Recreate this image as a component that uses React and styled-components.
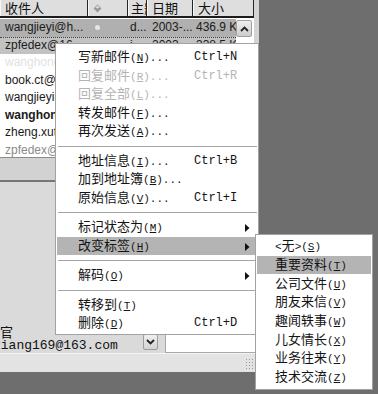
import React from 'react';
import styled, { createGlobalStyle } from 'styled-components';

const CJK = `"Noto Sans CJK SC", "Liberation Sans", sans-serif`;
const MONO = `"Liberation Mono", "DejaVu Sans Mono", monospace`;
const SANS = `"Liberation Sans", Arial, sans-serif`;
const COLS = '88px 40px 19px 46px 61px';

const GlobalStyle = createGlobalStyle`
  html, body { margin: 0; padding: 0; background: #6e6e6e; }
  body { width: 378px; height: 394px; overflow: hidden; }
`;

const rows = [
  { name: 'wangjieyi@h...', subj: 'd...', date: '2003-...', size: '436.9 K', bg: '#b0b0b0', dot: true },
  { name: 'zpfedex@16...', subj: 'i...', date: '2003-...', size: '338.5 K', bg: '#c2c2c2', dot: true, focus: true },
  { name: 'wanghong@...', subj: '', date: '2003-...', size: '12.4 K', tone: 'faint' },
  { name: 'book.ct@163...', subj: '', date: '2003-...', size: '8.1 K' },
  { name: 'wangjieyi@h...', subj: '', date: '2003-...', size: '5.6 K' },
  { name: 'wanghong@...', subj: '', date: '2003-...', size: '3.2 K', tone: 'bold' },
  { name: 'zheng.xutao...', subj: '', date: '2003-...', size: '2.9 K' },
  { name: 'zpfedex@163...', subj: '', date: '2003-...', size: '1.7 K', tone: 'gray' },
];

const menu = [
  { label: '写新邮件', key: 'N', dots: true, sc: 'Ctrl+N' },
  { label: '回复邮件', key: 'R', dots: true, sc: 'Ctrl+R', disabled: true },
  { label: '回复全部', key: 'L', dots: true, disabled: true },
  { label: '转发邮件', key: 'F', dots: true },
  { label: '再次发送', key: 'A', dots: true },
  'sep',
  { label: '地址信息', key: 'I', dots: true, sc: 'Ctrl+B' },
  { label: '加到地址簿', key: 'B', dots: true },
  { label: '原始信息', key: 'V', dots: true, sc: 'Ctrl+I' },
  'sep',
  { label: '标记状态为', key: 'M', sub: true },
  { label: '改变标签', key: 'H', sub: true, active: true },
  'sep',
  { label: '解码', key: 'O', sub: true },
  'sep',
  { label: '转移到', key: 'T' },
  { label: '删除', key: 'D', sc: 'Ctrl+D' },
];

const tags = [
  { label: '无', key: 'S', angle: true },
  { label: '重要资料', key: 'T', active: true },
  { label: '公司文件', key: 'U' },
  { label: '朋友来信', key: 'V' },
  { label: '趣闻轶事', key: 'W' },
  { label: '儿女情长', key: 'X' },
  { label: '业务往来', key: 'Y' },
  { label: '技术交流', key: 'Z' },
];

const Screen = styled.div`
  position: relative;
  width: 378px;
  height: 394px;
  background: #6e6e6e;
  overflow: hidden;
`;

const Window = styled.div`
  width: 259px;
  height: 372px;
  background: #d4d4d4;
  display: flex;
  flex-direction: column;
`;

const MailList = styled.div`
  width: 254px;
  height: 158px;
  box-sizing: border-box;
  background: #fff;
  border-bottom: 1px solid #8c8c8c;
  display: flex;
  flex-direction: column;
  overflow: hidden;
`;

const HeaderRow = styled.div`
  display: grid;
  grid-template-columns: ${COLS};
  height: 18px;
  box-sizing: border-box;
  background: #dedede;
  border-bottom: 2px solid #1c1c1c;
`;

const HeaderCell = styled.div`
  display: flex;
  align-items: center;
  padding-left: ${p => p.$pad || 4}px;
  border-right: 1px solid #262626;
  border-left: 1px solid #f6f6f6;
  font: 13px/16px ${CJK};
  color: #111;
  white-space: nowrap;
  overflow: hidden;
`;

const ListBody = styled.div`
  display: flex;
  flex: 1;
  min-height: 0;
`;

const Rows = styled.div`
  width: 236px;
  overflow: hidden;
  padding-top: 1px;
`;

const Row = styled.div`
  display: grid;
  grid-template-columns: ${COLS};
  height: 17.5px;
  box-sizing: border-box;
  background: ${p => p.$bg || '#fff'};
  border-top: ${p => (p.$focus ? '1px dotted #444' : 'none')};
  font: ${p => (p.$tone === 'bold' ? 700 : 400)} 12px/17px ${SANS};
  color: ${p => (p.$tone === 'faint' ? '#e2e2e2' : p.$tone === 'gray' ? '#8a8a8a' : '#1a1a1a')};
`;

const Cell = styled.div`
  display: flex;
  align-items: center;
  padding-left: ${p => p.$pad || 4}px;
  white-space: nowrap;
  overflow: hidden;
`;

const Dot = styled.span`
  width: 5px;
  height: 5px;
  border-radius: 50%;
  background: #e6e6e6;
`;

const ScrollTrack = styled.div`
  width: 18px;
  padding-top: 2px;
  background: #fff;
`;

const ScrollButton = styled.div`
  width: 16px;
  height: 17px;
  box-sizing: border-box;
  border: 1px solid #a0a0a0;
  border-radius: 2px;
  background: linear-gradient(#eeeeee, #cdcdcd);
  display: flex;
  align-items: center;
  justify-content: center;
`;

const Gap = styled.div`
  height: 22px;
  background: #d2d2d2;
`;

const Preview = styled.div`
  flex: 1;
  background: #dadada;
  border-top: 2px solid #767676;
  display: flex;
  flex-direction: column;
  justify-content: flex-end;
`;

const FieldRow = styled.div`
  display: flex;
  align-items: flex-end;
`;

const AddressCol = styled.div`
  width: 143px;
  overflow: hidden;
`;

const OfficeLine = styled.div`
  font: 13px/15px ${CJK};
  color: #111;
`;

const EmailLine = styled.div`
  margin-left: -7px;
  font: 13px/14px ${MONO};
  color: #111;
  white-space: nowrap;
`;

const DropButton = styled.div`
  width: 15px;
  height: 16px;
  margin-bottom: 3px;
  box-sizing: border-box;
  border: 1px solid #9c9c9c;
  border-radius: 2px;
  background: linear-gradient(#efefef, #d2d2d2);
  display: flex;
  align-items: center;
  justify-content: center;
`;

const TextBox = styled.div`
  width: 93px;
  height: 21px;
  margin-left: 7px;
  box-sizing: border-box;
  background: #fff;
  border: 1px solid #a8a8a8;
`;

const StatusStrip = styled.div`
  height: 19px;
  box-sizing: border-box;
  background: #e3e3e3;
  border-top: 1px solid #f4f4f4;
  display: flex;
  justify-content: flex-end;
  align-items: flex-end;
`;

const Grip = styled.div`
  width: 12px;
  height: 12px;
  margin: 0 2px 2px 0;
  background-image: radial-gradient(#9a9a9a 0.8px, transparent 1px);
  background-size: 3px 3px;
`;

const Menu = styled.div`
  position: absolute;
  left: ${p => p.$x}px;
  top: ${p => p.$y}px;
  width: ${p => p.$w}px;
  box-sizing: border-box;
  background: #fff;
  border: 1px solid #a2a2a2;
  padding: ${p => p.$pad};
`;

const Item = styled.div`
  display: grid;
  grid-template-columns: ${p => p.$cols};
  align-items: center;
  height: ${p => p.$h}px;
  margin: 0 1px;
  padding-left: ${p => p.$indent}px;
  background: ${p => (p.$active ? '#b4b4b4' : 'transparent')};
  color: ${p => (p.$disabled ? '#b4b4b4' : '#141414')};
`;

const Label = styled.span`
  font: 13px/16px ${CJK};
  white-space: nowrap;
`;

const Latin = styled.span`
  font: 11px/16px ${MONO};
  u {
    text-underline-offset: 1px;
  }
`;

const Shortcut = styled.span`
  font: 12px/16px ${MONO};
  white-space: nowrap;
`;

const Separator = styled.div`
  height: 11px;
  display: flex;
  align-items: center;
  margin: 0 1px 0 2px;
  &::after {
    content: '';
    flex: 1;
    border-top: 1px solid #a6a6a6;
  }
`;

const ChevronUp = () => (
  <svg width="9" height="6" viewBox="0 0 9 6">
    <path d="M1 5 L4.5 1.5 L8 5" fill="none" stroke="#222" strokeWidth="1.8" />
  </svg>
);

const ChevronDown = () => (
  <svg width="9" height="6" viewBox="0 0 9 6">
    <path d="M1 1 L4.5 4.5 L8 1" fill="none" stroke="#222" strokeWidth="1.8" />
  </svg>
);

const Diamond = () => (
  <svg width="9" height="9" viewBox="0 0 9 9">
    <path d="M4.5 0.5 L8.5 4.5 L4.5 8.5 L0.5 4.5 Z" fill="#9a9a9a" />
    <path d="M4.5 1.5 L6.5 3.5 L4.5 4.5 L2.5 3.5 Z" fill="#dcdcdc" />
  </svg>
);

const Arrow = () => (
  <svg width="5" height="8" viewBox="0 0 5 8">
    <path d="M0 0 L4.5 4 L0 8 Z" fill="#111" />
  </svg>
);

const MenuEntry = ({ item }) => (
  <Item
    $cols="116px 1fr 12px"
    $h={18.5}
    $indent={21}
    $active={item.active}
    $disabled={item.disabled}
  >
    <Label>
      {item.label}
      <Latin>
        (<u>{item.key}</u>){item.dots ? '...' : ''}
      </Latin>
    </Label>
    {item.sc ? <Shortcut>{item.sc}</Shortcut> : <span />}
    <span>{item.sub ? <Arrow /> : null}</span>
  </Item>
);

const TagEntry = ({ tag }) => (
  <Item $cols="1fr" $h={18.7} $indent={18} $active={tag.active}>
    <Label>
      {tag.angle && <Latin>&lt;</Latin>}
      {tag.label}
      {tag.angle && <Latin>&gt;</Latin>}
      <Latin>
        (<u>{tag.key}</u>)
      </Latin>
    </Label>
  </Item>
);

export default function App() {
  return (
    <Screen>
      <GlobalStyle />
      <Window>
        <MailList>
          <HeaderRow>
            <HeaderCell>收件人</HeaderCell>
            <HeaderCell $pad={4}>
              <Diamond />
            </HeaderCell>
            <HeaderCell $pad={2}>主题</HeaderCell>
            <HeaderCell>日期</HeaderCell>
            <HeaderCell>大小</HeaderCell>
          </HeaderRow>
          <ListBody>
            <Rows>
              {rows.map((r, i) => (
                <Row key={i} $bg={r.bg} $focus={r.focus} $tone={r.tone}>
                  <Cell $pad={5}>{r.name}</Cell>
                  <Cell $pad={7}>{r.dot ? <Dot /> : null}</Cell>
                  <Cell $pad={2}>{r.subj}</Cell>
                  <Cell $pad={5}>{r.date}</Cell>
                  <Cell $pad={3}>{r.size}</Cell>
                </Row>
              ))}
            </Rows>
            <ScrollTrack>
              <ScrollButton>
                <ChevronUp />
              </ScrollButton>
            </ScrollTrack>
          </ListBody>
        </MailList>
        <Gap />
        <Preview>
          <FieldRow>
            <AddressCol>
              <OfficeLine>官</OfficeLine>
              <EmailLine>xiang169@163.com</EmailLine>
            </AddressCol>
            <DropButton>
              <ChevronDown />
            </DropButton>
            <TextBox />
          </FieldRow>
        </Preview>
        <StatusStrip>
          <Grip />
        </StatusStrip>
      </Window>

      <Menu $x={55} $y={43} $w={204} $pad="4px 0 1px">
        {menu.map((m, i) =>
          m === 'sep' ? <Separator key={i} /> : <MenuEntry key={i} item={m} />
        )}
      </Menu>

      <Menu $x={255} $y={234} $w={118} $pad="2px 0">
        {tags.map((t, i) => (
          <TagEntry key={i} tag={t} />
        ))}
      </Menu>
    </Screen>
  );
}
